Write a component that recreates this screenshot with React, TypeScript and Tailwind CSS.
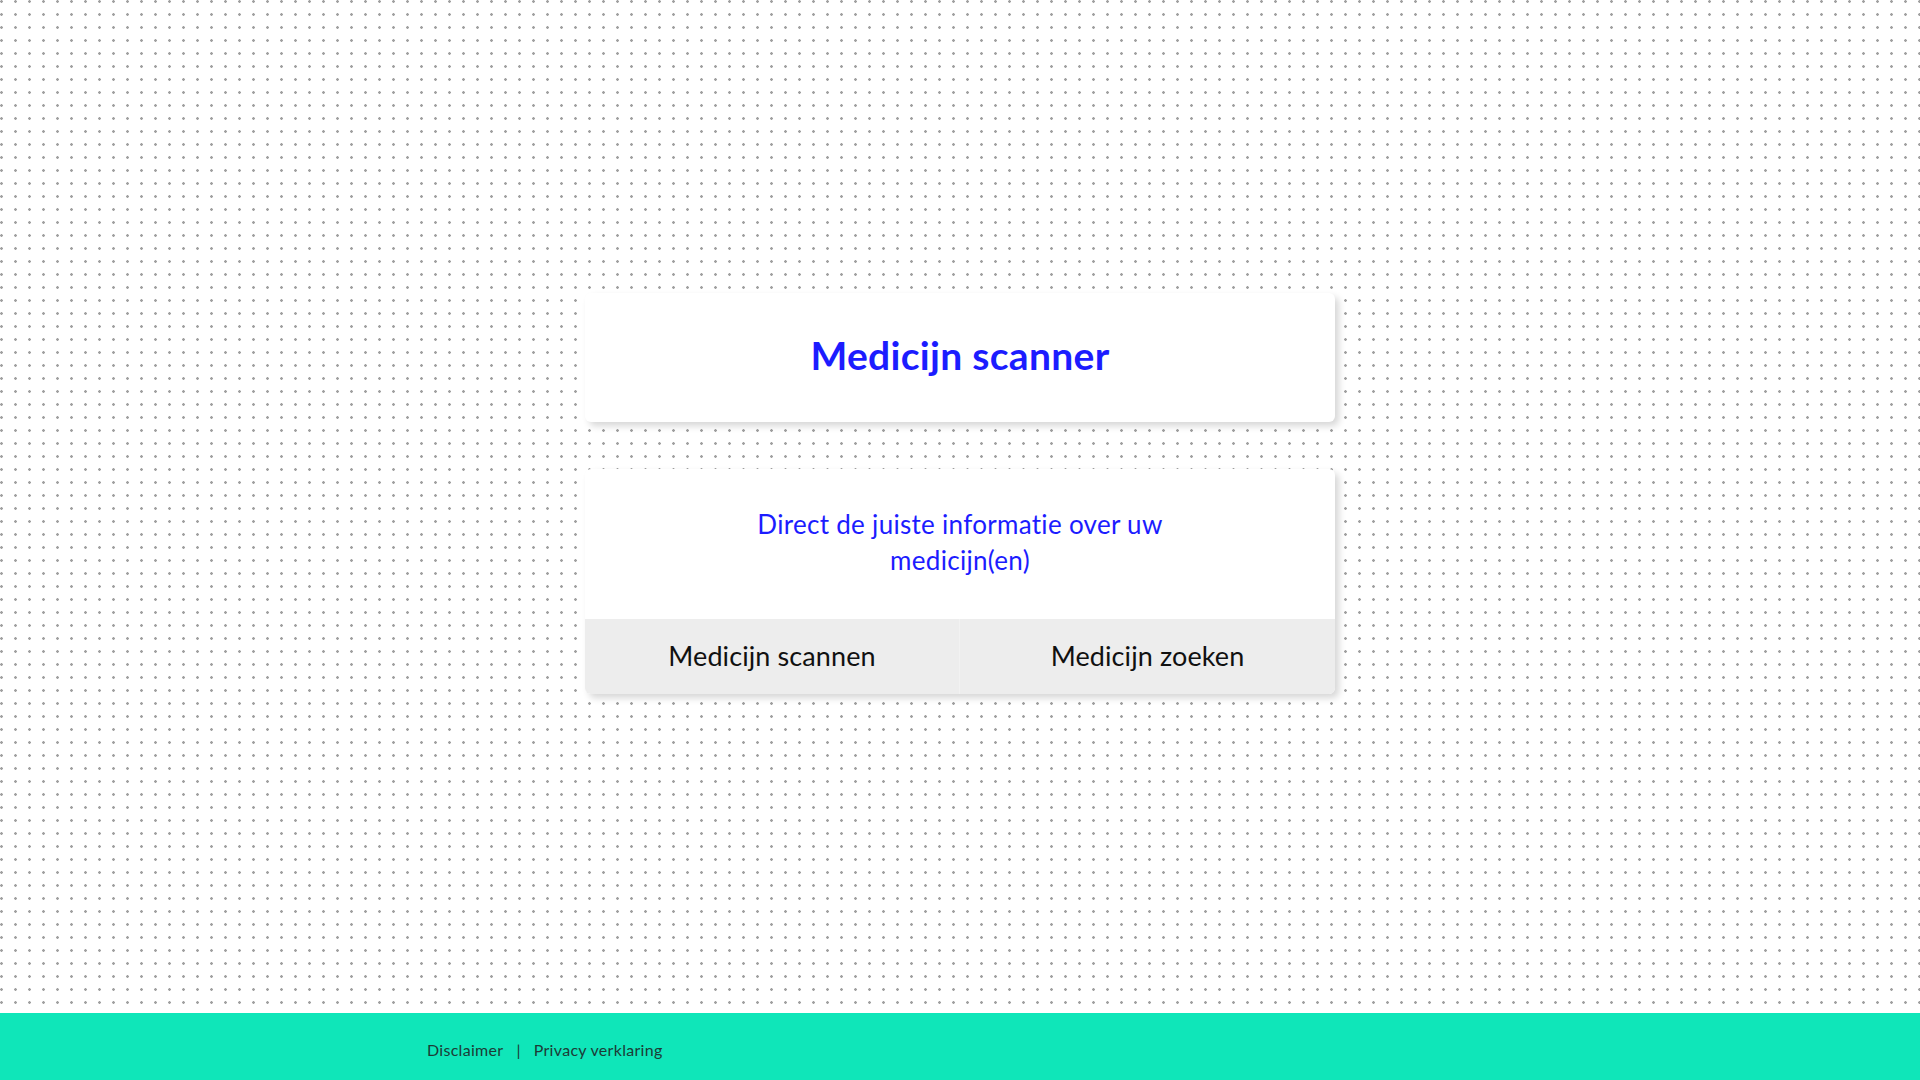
export default function App() {
  return (
    <div
      className="flex min-h-screen flex-col bg-white bg-[radial-gradient(circle_at_1.5px_1.5px,#a0a0a0_1px,transparent_1.6px)] bg-size-[14px_13px]"
      style={{ fontFamily: "Lato, 'Open Sans', sans-serif" }}
    >
      <main className="flex flex-1 flex-col items-center pt-[293px]">
        <section className="flex h-[129px] w-[750px] items-center justify-center rounded-md bg-white pb-[4px] shadow-[4px_4px_7px_rgba(0,0,0,0.16)]">
          <h1 className="text-[39px] font-bold tracking-[0.3px] text-[#1c1cff]">
            Medicijn scanner
          </h1>
        </section>

        <section className="mt-[47px] w-[750px] overflow-hidden rounded-md bg-white shadow-[4px_4px_7px_rgba(0,0,0,0.16)]">
          <div className="flex h-[150px] items-center justify-center pb-[4px]">
            <p className="max-w-[440px] text-center text-[26px] leading-[36px] tracking-[0.3px] text-[#1c1cff]">
              Direct de juiste informatie over uw medicijn(en)
            </p>
          </div>
          <div className="grid h-[75px] grid-cols-2 bg-[#ededed]">
            <button className="flex items-center justify-center border-r border-[#f2f2f2] text-[27px] tracking-[0.1px] text-[#111]">
              Medicijn scannen
            </button>
            <button className="flex items-center justify-center text-[27px] tracking-[0.1px] text-[#111]">
              Medicijn zoeken
            </button>
          </div>
        </section>
      </main>

      <footer className="h-[67px] bg-[#0fe6b9]">
        <div className="mx-auto flex h-full w-[1066px] items-center pt-[7px] text-[16px] tracking-[0.3px] text-[#1d3b36]">
          <a href="#">Disclaimer</a>
          <span className="mx-[13px]">|</span>
          <a href="#">Privacy verklaring</a>
        </div>
      </footer>
    </div>
  );
}
